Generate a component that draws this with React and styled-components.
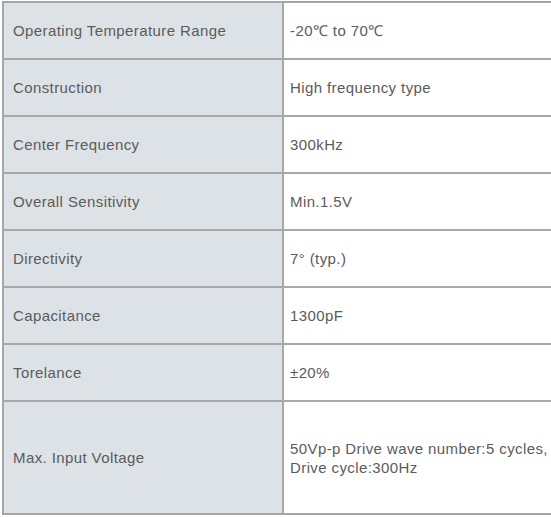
import React from 'react';
import styled, {createGlobalStyle} from 'styled-components';

const GlobalStyle = createGlobalStyle`
  html, body {
    margin: 0;
    padding: 0;
    background: #ffffff;
    overflow: hidden;
  }
  body {
    padding: 1px 0 0 2px;
  }
`;

const SpecTable = styled.table`
  border-collapse: separate;
  border-spacing: 0;
  border: 1px solid #a3a3a3;
  width: 580px;
  table-layout: fixed;
  font-family: "Liberation Sans", Arial, sans-serif;
  font-size: 15px;
  letter-spacing: 0.4px;
  color: #5b5b5b;
`;

const Cell = styled.td`
  border: 1px solid #a8a8a8;
  height: ${({tall}) => (tall ? '111px' : '55px')};
  padding: 0 8px 0 ${({label}) => (label ? '9px' : '6px')};
  vertical-align: middle;
  line-height: 19px;
  background: ${({label}) => (label ? '#dde2e6' : '#ffffff')};
  white-space: nowrap;
`;

const specs = [
  {name: 'Operating Temperature Range', value: '-20℃ to 70℃'},
  {name: 'Construction', value: 'High frequency type'},
  {name: 'Center Frequency', value: '300kHz'},
  {name: 'Overall Sensitivity', value: 'Min.1.5V'},
  {name: 'Directivity', value: '7° (typ.)'},
  {name: 'Capacitance', value: '1300pF'},
  {name: 'Torelance', value: '±20%'},
];

export default function App() {
  return (
    <>
      <GlobalStyle />
      <SpecTable>
        <colgroup>
          <col style={{width: '280px'}} />
          <col />
        </colgroup>
        <tbody>
          {specs.map((s) => (
            <tr key={s.name}>
              <Cell label>{s.name}</Cell>
              <Cell>{s.value}</Cell>
            </tr>
          ))}
          <tr>
            <Cell label tall>Max. Input Voltage</Cell>
            <Cell tall>
              50Vp-p Drive wave number:5 cycles,
              <br />
              Drive cycle:300Hz
            </Cell>
          </tr>
        </tbody>
      </SpecTable>
    </>
  );
}
